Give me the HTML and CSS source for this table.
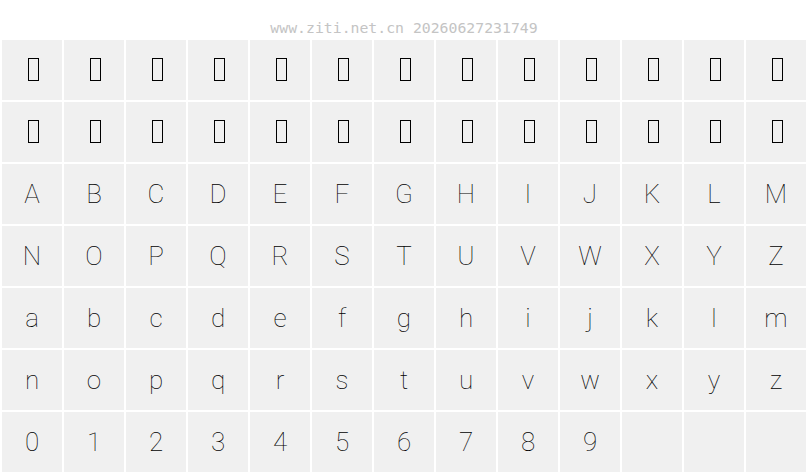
FILE: index.html
```html
<!DOCTYPE html>
<html lang="zh">
<head>
  <meta charset="UTF-8" />
  <title>字体预览</title>
  <link rel="stylesheet" href="styles.css">
</head>
<body>
  <div class="stamp">www.ziti.net.cn 20260627231749</div>
  <div class="chart" id="chart"></div>

  <script>
    // 预览字符表
    const rows = [
      'BOX', 'BOX',
      'ABCDEFGHIJKLM',
      'NOPQRSTUVWXYZ',
      'abcdefghijklm',
      'nopqrstuvwxyz',
      '0123456789'
    ];
    const chart = document.getElementById('chart');
    rows.forEach(r => {
      for (let i = 0; i < 13; i++) {
        const cell = document.createElement('div');
        cell.className = 'cell';
        if (r === 'BOX') {
          cell.innerHTML = '<span class="tofu"></span>';
        } else if (r[i]) {
          cell.textContent = r[i];
        }
        chart.appendChild(cell);
      }
    });
  </script>
</body>
</html>
```

FILE: styles.css
```css
body {
  margin: 0;
  background: #fff;
  width: 808px;
}
.stamp {
  height: 40px;
  line-height: 56px;
  text-align: center;
  font-family: "DejaVu Sans Mono", monospace;
  font-size: 14.8px;
  color: #c4c4c4;
}
.chart {
  display: grid;
  grid-template-columns: repeat(13, 60px);
  grid-auto-rows: 60px;
  gap: 2px;
  padding: 0 2px;
}
.cell {
  background: #f0f0f0;
  display: flex;
  align-items: center;
  justify-content: center;
  font-family: Roboto, "Liberation Sans", sans-serif;
  font-weight: 100;
  font-size: 26px;
  color: #000;
}
.tofu {
  width: 9px;
  height: 21px;
  border: 1.5px solid #000;
  margin-left: 3px;
  margin-top: -2px;
}
```
